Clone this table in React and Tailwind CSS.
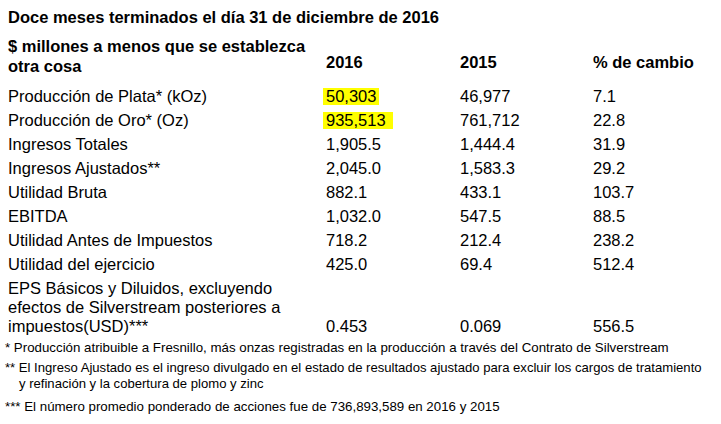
export default function App() {
  const rows = [
    { label: 'Producción de Plata* (kOz)', a: '50,303', b: '46,977', c: '7.1', mark: 'pr-[3px]' },
    { label: 'Producción de Oro* (Oz)', a: '935,513', b: '761,712', c: '22.8', mark: 'pr-[7px]' },
    { label: 'Ingresos Totales', a: '1,905.5', b: '1,444.4', c: '31.9' },
    { label: 'Ingresos Ajustados**', a: '2,045.0', b: '1,583.3', c: '29.2' },
    { label: 'Utilidad Bruta', a: '882.1', b: '433.1', c: '103.7' },
    { label: 'EBITDA', a: '1,032.0', b: '547.5', c: '88.5' },
    { label: 'Utilidad Antes de Impuestos', a: '718.2', b: '212.4', c: '238.2' },
    { label: 'Utilidad del ejercicio', a: '425.0', b: '69.4', c: '512.4' }
  ];

  return (
    <div className="w-[721px] h-[424px] bg-white text-black overflow-hidden font-['Liberation_Sans',Arial,sans-serif]">
      <div className="pl-2 pt-[8px]">
        <h1 className="text-[16.5px] font-bold leading-[19px]">
          Doce meses terminados el día 31 de diciembre de 2016
        </h1>

        {/* Header */}
        <div className="grid grid-cols-[318px_134px_133px_1fr] mt-[9px] text-[16.5px] font-bold leading-[20px]">
          <div>
            $ millones a menos que se establezca
            <br />
            otra cosa
          </div>
          <div className="self-end pb-[4px]">2016</div>
          <div className="self-end pb-[4px]">2015</div>
          <div className="self-end pb-[4px]">% de cambio</div>
        </div>

        {/* Rows */}
        <div className="mt-[8px] text-[16.5px]">
          {rows.map((r) => (
            <div key={r.label} className="grid grid-cols-[318px_134px_133px_1fr] h-[24px] items-center">
              <div>{r.label}</div>
              <div>
                {r.mark ? (
                  <span className={`inline-block bg-[#ffff00] -ml-[3px] pl-[3px] leading-[17px] ${r.mark}`}>{r.a}</span>
                ) : (
                  r.a
                )}
              </div>
              <div>{r.b}</div>
              <div>{r.c}</div>
            </div>
          ))}
          <div className="grid grid-cols-[318px_134px_133px_1fr] items-end leading-[19px] pt-[3px]">
            <div>
              EPS Básicos y Diluidos, excluyendo
              <br />
              efectos de Silverstream posteriores a
              <br />
              impuestos(USD)***
            </div>
            <div>0.453</div>
            <div>0.069</div>
            <div>556.5</div>
          </div>
        </div>
      </div>

      {/* Footnotes */}
      <div className="pl-[5px] pt-[4px] text-[13.3px] leading-[16px]">
        <p>* Producción atribuible a Fresnillo, más onzas registradas en la producción a través del Contrato de Silverstream</p>
        <p className="mt-[4px] text-[13.1px] whitespace-nowrap">
          ** El Ingreso Ajustado es el ingreso divulgado en el estado de resultados ajustado para excluir los cargos de tratamiento
          <br />
          <span className="pl-[14px]">y refinación y la cobertura de plomo y zinc</span>
        </p>
        <p className="mt-[7px]">*** El número promedio ponderado de acciones fue de 736,893,589 en 2016 y 2015</p>
      </div>
    </div>
  );
}
